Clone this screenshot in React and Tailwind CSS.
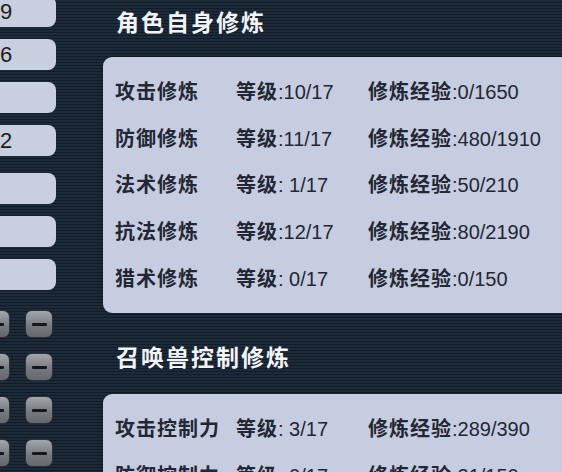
import React from "react";

const FONT = { fontFamily: '"Liberation Sans", "Noto Sans CJK SC", sans-serif' };

const selfRows = [
  ["攻击修炼", "10/17", "0/1650"],
  ["防御修炼", "11/17", "480/1910"],
  ["法术修炼", " 1/17", "50/210"],
  ["抗法修炼", "12/17", "80/2190"],
  ["猎术修炼", " 0/17", "0/150"],
];

const petRows = [
  ["攻击控制力", " 3/17", "289/390"],
  ["防御控制力", " 0/17", "21/150"],
];

function Row({ name, level, exp }) {
  return (
    <div className="grid grid-cols-[121px_132px_1fr] items-center h-[46.6px] text-[20px] text-[#232733] whitespace-pre">
      <span className="tracking-[1px] font-bold">{name}</span>
      <span>
        <span className="tracking-[1px] font-bold">等级</span>:{level}
      </span>
      <span>
        <span className="tracking-[1px] font-bold">修炼经验</span>:{exp}
      </span>
    </div>
  );
}

function Panel({ rows, className = "" }) {
  return (
    <div className={"rounded-l-[9px] bg-[#c6cde0] pl-[12px] pt-[12px] pb-[11px] shadow-[0_0_2px_rgba(0,0,0,0.5)] " + className}>
      {rows.map((r) => (
        <Row key={r[0]} name={r[0]} level={r[1]} exp={r[2]} />
      ))}
    </div>
  );
}

function Box({ text, className = "" }) {
  return (
    <div className={"h-[31px] w-[56px] rounded-r-[8px] bg-[#c8cfdf] text-[22px] leading-[31px] text-[#1a1d24] " + className}>
      {text}
    </div>
  );
}

function Minus({ className = "" }) {
  return (
    <div className={"flex h-[28px] w-[28px] items-center justify-center rounded-[7px] border border-[#2e3136] bg-[linear-gradient(180deg,#a3a6ab,#74777c_60%,#65686d)] " + className}>
      <div className="h-[3px] w-[15px] rounded-[1px] bg-[#14171b]" />
    </div>
  );
}

export default function App() {
  return (
    <div
      style={FONT}
      className="flex h-[472px] w-[562px] overflow-hidden bg-[repeating-linear-gradient(180deg,#1d2a3a_0px,#1d2a3a_2px,#121c28_2px,#121c28_3px)]"
    >
      <div className="flex w-[56px] shrink-0 flex-col">
        <div className="mt-[-4px] flex flex-col gap-[12px]">
          <Box text="9" />
          <Box text="6" />
          <Box text="" />
          <Box text="2" />
          <Box text="" className="mt-[5px]" />
          <Box text="" />
          <Box text="" />
        </div>
        <div className="mt-[20px] flex flex-col gap-[15px]">
          {[0, 1, 2, 3].map((i) => (
            <div key={i} className="ml-[-18px] flex gap-[15px]">
              <Minus />
              <Minus />
            </div>
          ))}
        </div>
      </div>
      <div className="ml-[47px] flex flex-1 flex-col pt-[6px]">
        <div className="h-[34px] pl-[13px] text-[23px] leading-[34px] font-bold tracking-[2px] text-[#f2f4f7]">
          角色自身修炼
        </div>
        <Panel rows={selfRows} className="mt-[17px]" />
        <div className="mt-[28px] h-[34px] pl-[13px] text-[23px] leading-[34px] font-bold tracking-[2px] text-[#f2f4f7]">
          召唤兽控制修炼
        </div>
        <Panel rows={petRows} className="mt-[19px]" />
      </div>
    </div>
  );
}
